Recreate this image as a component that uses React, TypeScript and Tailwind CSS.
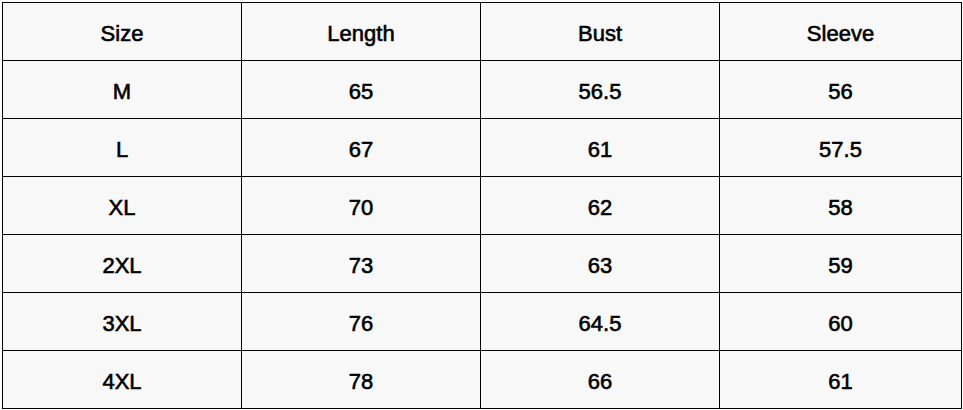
import React from "react";

const rows: string[][] = [
  ["Size", "Length", "Bust", "Sleeve"],
  ["M", "65", "56.5", "56"],
  ["L", "67", "61", "57.5"],
  ["XL", "70", "62", "58"],
  ["2XL", "73", "63", "59"],
  ["3XL", "76", "64.5", "60"],
  ["4XL", "78", "66", "61"],
];

export default function App() {
  return (
    <div className="w-[963px] h-[410px] bg-white pt-[2px] pl-[2px]">
      <div
        className="grid grid-cols-[239px_239px_239px_242px] grid-rows-[repeat(7,58px)] w-[960px] border-l border-t border-black bg-[#f8f8f8] text-[22px] font-normal text-black [-webkit-text-stroke:0.6px_#000]"
        style={{ fontFamily: '"Liberation Sans", Arial, sans-serif' }}
      >
        {rows.flatMap((r, i) =>
          r.map((c, j) => (
            <div
              key={`${i}-${j}`}
              className="flex items-center justify-center border-r border-b border-black pt-[3px]"
            >
              {c}
            </div>
          ))
        )}
      </div>
    </div>
  );
}
